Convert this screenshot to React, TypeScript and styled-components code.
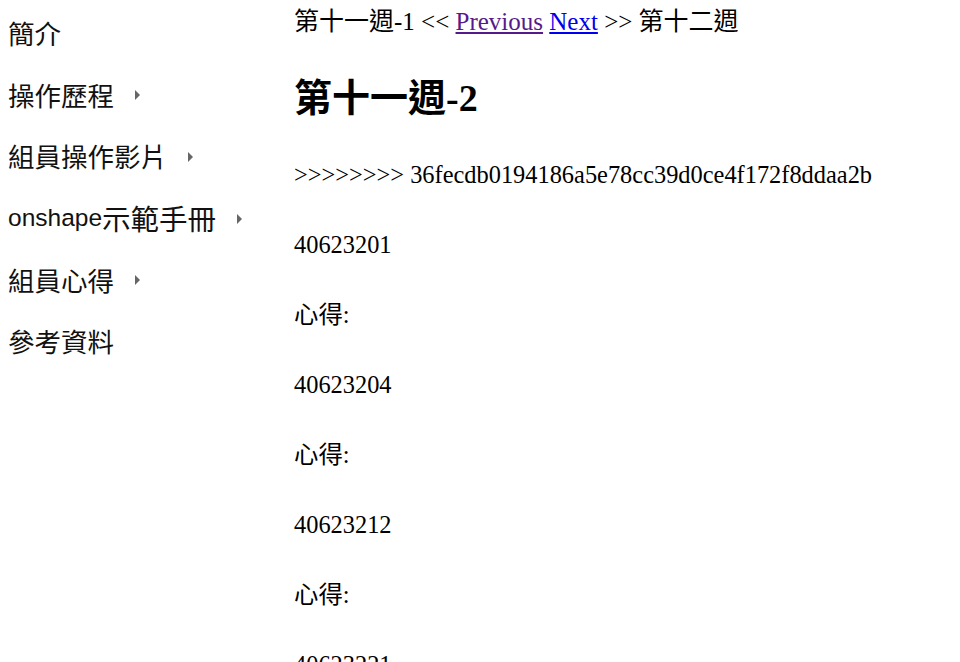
import React from "react";
import styled, { createGlobalStyle } from "styled-components";

const GlobalStyle = createGlobalStyle`
  html, body {
    margin: 0;
    padding: 0;
    background: #fff;
  }
`;

const menuItems = [
  { label: "簡介", hasCaret: false },
  { label: "操作歷程", hasCaret: true },
  { label: "組員操作影片", hasCaret: true },
  { label: "onshape示範手冊", latin: "onshape", hasCaret: true },
  { label: "組員心得", hasCaret: true },
  { label: "參考資料", hasCaret: false },
];

const members = ["40623201", "40623204", "40623212", "40623221"];

const App = () => {
  return (
    <Page>
      <GlobalStyle />
      <Sidebar>
        {menuItems.map((item) => (
          <MenuItem key={item.label}>
            {item.latin ? (
              <>
                <Latin>{item.latin}</Latin>
                <Wide>{item.label.slice(item.latin.length)}</Wide>
              </>
            ) : (
              item.label
            )}
            {item.hasCaret && <Caret />}
          </MenuItem>
        ))}
      </Sidebar>
      <Main>
        <NavLine>
          第十一週-1 &lt;&lt; <PrevLink href="#">Previous</PrevLink>{" "}
          <NextLink href="#">Next</NextLink> &gt;&gt; 第十二週
        </NavLine>
        <Title>第十一週-2</Title>
        <Para>&gt;&gt;&gt;&gt;&gt;&gt;&gt;&gt; 36fecdb0194186a5e78cc39d0ce4f172f8ddaa2b</Para>
        {members.map((id) => (
          <React.Fragment key={id}>
            <Para>{id}</Para>
            <Para>心得:</Para>
          </React.Fragment>
        ))}
      </Main>
    </Page>
  );
};

const Page = styled.div`
  display: grid;
  grid-template-columns: 286px 1fr;
  padding: 2px 8px 0;
  height: 660px;
  overflow: hidden;
  color: #000;
`;

const Sidebar = styled.ul`
  list-style: none;
  margin: 0;
  padding: 0;
  display: flex;
  flex-direction: column;
  font-family: "Liberation Sans", "Noto Sans CJK TC", sans-serif;
  font-size: 26.5px;
  color: #111;
`;

const MenuItem = styled.li`
  display: flex;
  align-items: center;
  height: 61.6px;
  white-space: nowrap;
`;

const Latin = styled.span`
  font-size: 24.5px;
`;

const Wide = styled.span`
  font-size: 28.5px;
`;

const Caret = styled.span`
  display: inline-block;
  width: 0;
  height: 0;
  margin-left: 21px;
  margin-top: 2px;
  border-top: 5px solid transparent;
  border-bottom: 5px solid transparent;
  border-left: 5px solid #666;
`;

const Main = styled.main`
  display: flex;
  flex-direction: column;
  gap: 42px;
  padding-top: 6px;
  font-family: "Liberation Serif", "Noto Sans CJK TC", serif;
  font-size: 24.4px;
  white-space: nowrap;
`;

const NavLine = styled.p`
  margin: 0;
  font-size: 25px;
  line-height: 28px;
`;

const PrevLink = styled.a`
  color: #551a8b;
`;

const NextLink = styled.a`
  color: #0000ee;
`;

const Title = styled.h1`
  margin: -1px 0 0;
  font-size: 38px;
  line-height: 42px;
  font-weight: bold;
`;

const Para = styled.p`
  margin: 0;
  line-height: 28px;
`;

export default App;
